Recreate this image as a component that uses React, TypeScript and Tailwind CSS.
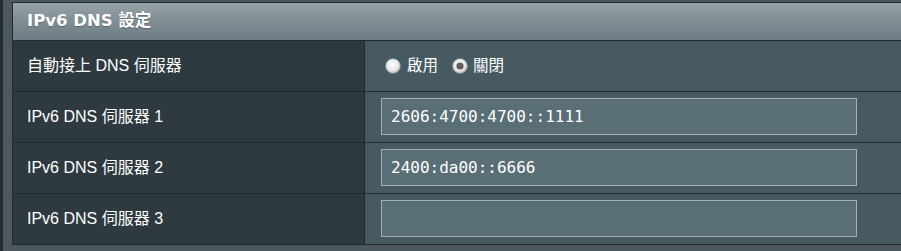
import React from "react";

function Radio({ checked }: { checked?: boolean }) {
  return (
    <svg width="16" height="16" viewBox="0 0 16 16" className="shrink-0">
      <defs>
        <radialGradient id={checked ? "rgc" : "rgu"} cx="45%" cy="40%" r="60%">
          <stop offset="0%" stopColor="#ffffff" />
          <stop offset="70%" stopColor="#e6e6e6" />
          <stop offset="100%" stopColor="#bdbdbd" />
        </radialGradient>
      </defs>
      <circle cx="8" cy="8" r="7.3" fill={`url(#${checked ? "rgc" : "rgu"})`} stroke="#9aa3a6" strokeWidth="0.8" />
      {checked && <circle cx="8" cy="8" r="3.6" fill="#5e5e5e" />}
    </svg>
  );
}

const labelFont = { fontFamily: '"Liberation Sans", Arial, "Noto Sans CJK TC", sans-serif' };

function Row({ label, children }: { label: string; children: React.ReactNode }) {
  return (
    <div className="flex h-[51px] border-b border-[#23292c]">
      <div
        className="w-[352px] shrink-0 border-r border-[#23292c] bg-[#2f3a40] pl-[14px] flex items-center text-[16px] text-white"
        style={labelFont}
      >
        {label}
      </div>
      <div className="flex-1 bg-[#475a61] flex items-center pl-[16px]">{children}</div>
    </div>
  );
}

function Input({ value }: { value: string }) {
  return (
    <div className="h-[37px] w-[476px] border border-[#a3b0b5] bg-[#5a6e75] flex items-center pl-[9px] text-white text-[16px] mb-[1px]"
      style={{ fontFamily: '"DejaVu Sans Mono", "Liberation Mono", monospace' }}>
      {value}
    </div>
  );
}

export default function App() {
  return (
    <div className="w-[901px] h-[251px] overflow-hidden bg-[#4d585d] border-l-[3px] border-[#23292c] pl-[9px] pt-[2px]">
      <div className="w-[920px] border border-[#23292c] border-b-0">
        <div
          className="h-[38px] border-b border-[#23292c] bg-gradient-to-b from-[#96a3a8] to-[#6b7a81] flex items-center pl-[14px] text-white font-bold text-[16.5px]"
          style={{ fontFamily: '"DejaVu Sans", Verdana, "Noto Sans CJK TC", sans-serif', textShadow: "0 1px 1px rgba(0,0,0,0.25)" }}
        >
          IPv6 DNS 設定
        </div>
        <Row label="自動接上 DNS 伺服器">
          <div className="flex items-center text-white text-[15.5px]" style={labelFont}>
            <div className="ml-[4px] flex items-center">
              <Radio />
              <span className="ml-[6px]">啟用</span>
            </div>
            <div className="ml-[14px] flex items-center">
              <Radio checked />
              <span className="ml-[5px]">關閉</span>
            </div>
          </div>
        </Row>
        <Row label="IPv6 DNS 伺服器 1">
          <Input value="2606:4700:4700::1111" />
        </Row>
        <Row label="IPv6 DNS 伺服器 2">
          <Input value="2400:da00::6666" />
        </Row>
        <Row label="IPv6 DNS 伺服器 3">
          <Input value="" />
        </Row>
      </div>
    </div>
  );
}
